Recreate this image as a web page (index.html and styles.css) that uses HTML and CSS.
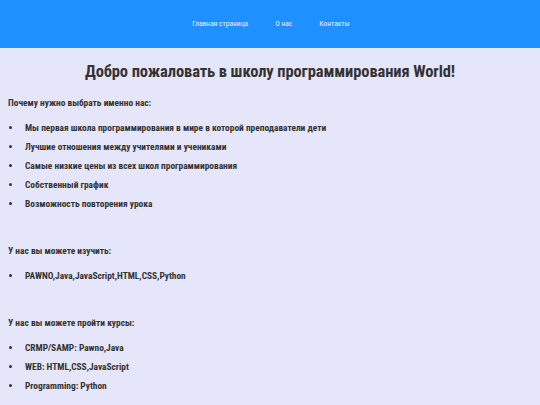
FILE: index.html
```html
<!DOCTYPE html>
<html>
<head>
<meta charset="utf-8">
<title>World</title>
<link rel="stylesheet" href="styles.css">
</head>
<body>

<header class="topbar">
  <nav class="menu">
    <a href="#">Главная страница</a>
    <a href="#">О нас</a>
    <a href="#">Контакты</a>
  </nav>
</header>

<main class="content">
  <h1>Добро пожаловать в школу программирования World!</h1>

  <p class="lead">Почему нужно выбрать именно нас:</p>
  <ul>
    <li>Мы первая школа программирования в мире в которой преподаватели дети</li>
    <li>Лучшие отношения между учителями и учениками</li>
    <li>Самые низкие цены из всех школ программирования</li>
    <li>Собственный график</li>
    <li>Возможность повторения урока</li>
  </ul>

  <p class="lead">У нас вы можете изучить:</p>
  <ul>
    <li>PAWNO,Java,JavaScript,HTML,CSS,Python</li>
  </ul>

  <p class="lead">У нас вы можете пройти курсы:</p>
  <ul>
    <li>CRMP/SAMP: Pawno,Java</li>
    <li>WEB: HTML,CSS,JavaScript</li>
    <li>Programming: Python</li>
  </ul>
</main>

</body>
</html>
```

FILE: styles.css
```css
html,body,h1,p,ul,li{margin:0;padding:0;}
*{box-sizing:border-box;}
body{
  background:#e6e6fa;
  color:#333;
  font-family:"Roboto Condensed","Liberation Sans Narrow","Liberation Sans",Arial,sans-serif;
}
.topbar{
  background:#1e90ff;
  height:48px;
  display:flex;
  align-items:center;
  justify-content:center;
}
.menu{display:flex;gap:27px;padding-left:2px;}
.menu a{
  color:#e8f2ff;
  text-decoration:none;
  font-size:7.5px;
  line-height:12px;
}
.content{padding:12px 8px 0 8px;}
h1{
  font-size:16.5px;
  line-height:24px;
  font-weight:bold;
  text-align:center;
  letter-spacing:-0.1px;
  margin:0 0 12px 0;
}
.lead{font-size:9.4px;line-height:14px;font-weight:bold;margin:0 0 8px 0;}
ul{list-style:none;margin:0 0 31px 0;}
ul:last-child{margin-bottom:0;}
li{
  font-size:9.4px;
  line-height:19px;
  font-weight:bold;
  position:relative;
  padding-left:17px;
}
li::before{
  content:"";
  position:absolute;
  left:1px;
  top:8px;
  width:3px;
  height:3px;
  border-radius:50%;
  background:#333;
}
```
